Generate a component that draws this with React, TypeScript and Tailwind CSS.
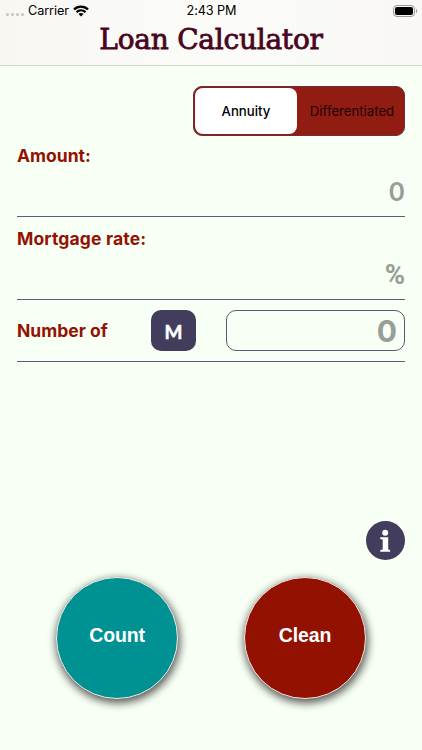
import { useState } from 'react'

interface RoundButtonProps {
  label: string
  color: string
  onClick: () => void
}

const RoundButton = ({ label, color, onClick }: RoundButtonProps) => (
  <button
    type="button"
    onClick={onClick}
    className={`w-[122px] h-[122px] rounded-full border border-[#f4e9e4] pb-[4px] shadow-[1px_3px_9px_1px_rgba(0,0,0,0.65)] font-['Liberation_Sans',sans-serif] text-[19.5px] tracking-[-0.15px] font-bold text-white ${color}`}
  >
    {label}
  </button>
)

const StatusBar = () => (
  <div className="h-5 grid grid-cols-3 items-center pl-[6px] pr-[5px] pt-px text-[12.7px] leading-5 text-black">
    <div className="flex items-center">
      <div className="flex gap-[2px] mr-[4px] mt-[7px]">
        {[0, 1, 2, 3].map((dot) => (
          <span key={dot} className="w-[3px] h-[3px] rounded-full bg-[#c4c4c1]" />
        ))}
      </div>
      <span className="tracking-[-0.1px]">Carrier</span>
      <svg className="ml-[4px] mb-px" width="16" height="12" viewBox="0 0 16 12" fill="none" stroke="#000">
        <path d="M1 4.5C4.9.7 11.1.7 15 4.5" strokeWidth="2.4" />
        <path d="M3.5 7.1c2.5-2.5 6.5-2.5 9 0" strokeWidth="2.2" />
        <path d="M8 11.4 5.5 8.9c1.4-1.3 3.6-1.3 5 0z" fill="#000" stroke="none" />
      </svg>
    </div>
    <span className="text-center tracking-[-0.1px]">2:43 PM</span>
    <div className="flex items-center justify-end mb-px">
      <div className="w-[22px] h-[12px] rounded-[4px] border border-[#999] p-px">
        <div className="w-full h-full rounded-[2px] bg-black" />
      </div>
      <div className="w-px h-1 ml-px rounded-r-full bg-[#999]" />
    </div>
  </div>
)

const App = () => {
  const [mode, setMode] = useState('Annuity')
  const [amount, setAmount] = useState('')
  const [rate, setRate] = useState('')
  const [period, setPeriod] = useState('')

  const clean = () => {
    setAmount('')
    setRate('')
    setPeriod('')
  }

  return (
    <div className="w-full h-[750px] overflow-hidden bg-[#f8fff4] font-[Inter,sans-serif]">
      <header className="h-[66px] border-b border-[#d5d5d1] bg-linear-to-r from-[#f8f7f2] via-[#fbfbf8] to-[#f9f8f4]">
        <StatusBar />
        <h1 className="text-center font-['DejaVu_Serif',serif] text-[28px] leading-[39px] tracking-[-0.25px] [-webkit-text-stroke:0.8px_#48051f] text-[#48051f] whitespace-nowrap">
          Loan Calculator
        </h1>
      </header>

      <main className="pl-[17px] pr-[17px] pt-5">
        <div className="ml-auto w-[212px] h-[50px] flex rounded-[9px] border border-[#6b2d42] bg-[#911c12] p-px">
          {['Annuity', 'Differentiated'].map((item) => (
            <button
              key={item}
              type="button"
              onClick={() => setMode(item)}
              className={`text-[13.2px] whitespace-nowrap rounded-[8px] pt-px ${
                mode === item ? 'w-[102px] bg-white font-medium text-black' : 'flex-1 pl-1 text-[#1c0202]'
              }`}
            >
              {item}
            </button>
          ))}
        </div>

        <label className="block h-[81px] pt-[8px] border-b border-[#5f5b74]">
          <span className="block text-[17.5px] leading-6 font-bold text-[#931204]">Amount:</span>
          <input
            value={amount}
            onChange={(e) => setAmount(e.target.value)}
            placeholder="0"
            className="block w-full h-10 mt-[4px] text-right text-[25px] font-semibold outline-none text-[#423b5d] placeholder:text-[#999d98]"
          />
        </label>

        <label className="block h-[83px] pt-[10px] border-b border-[#5f5b74]">
          <span className="block text-[17.5px] leading-6 tracking-[0.15px] font-bold text-[#931204]">Mortgage rate:</span>
          <input
            value={rate}
            onChange={(e) => setRate(e.target.value)}
            placeholder="%"
            className="block w-full h-10 mt-[4px] text-right font-[Roboto,sans-serif] text-[27.5px] font-bold outline-none text-[#423b5d] placeholder:text-[#999d98]"
          />
        </label>

        <div className="h-[62px] flex items-center border-b border-[#5f5b74]">
          <span className="w-[134px] pt-[2px] text-[17.5px] font-bold text-[#931204]">Number of</span>
          <button
            type="button"
            className="w-[45px] h-[41px] rounded-[10px] bg-[#423d5d] pt-[4px] font-[Lato,sans-serif] text-[19px] font-bold [-webkit-text-stroke:0.5px_#fff] text-white"
          >
            M
          </button>
          <input
            value={period}
            onChange={(e) => setPeriod(e.target.value)}
            placeholder="0"
            className="ml-auto w-[179px] h-[41px] rounded-[10px] border border-[#5d5970] pt-[2px] pr-[7px] text-right text-[30px] font-bold outline-none text-[#423b5d] placeholder:text-[#999d98]"
          />
        </div>

        <div className="mt-[159px] flex justify-end">
          <svg width="39" height="39" viewBox="0 0 39 39">
            <circle cx="19.5" cy="19.5" r="19.5" fill="#423d5d" />
            <circle cx="19.2" cy="11.8" r="3" fill="#fff" />
            <path d="M14.2 16.3h8v12.2l1.9.5v1.8h-9.8V29l2.4-.5V18.4l-2.5-.4z" fill="#fff" />
          </svg>
        </div>

        <div className="mt-[17px] pl-[39px] pr-[39px] flex justify-between">
          <RoundButton label="Count" color="bg-[#009292]" onClick={() => {}} />
          <RoundButton label="Clean" color="bg-[#921100]" onClick={clean} />
        </div>
      </main>
    </div>
  )
}

export default App
